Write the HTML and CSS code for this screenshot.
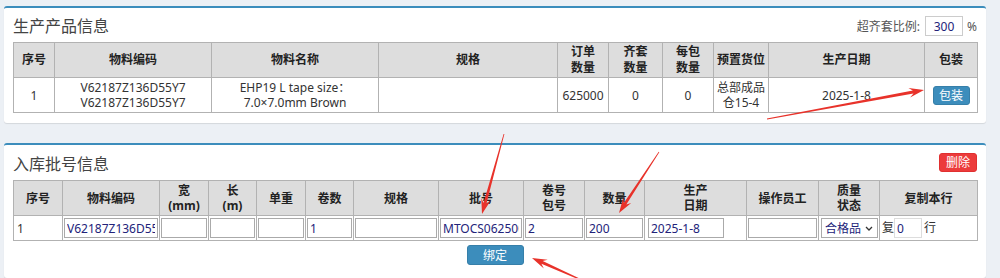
FILE: index.html
```html
<!DOCTYPE html>
<html lang="zh-CN">
<head>
    <meta charset="UTF-8">
    <title>生产入库</title>
    <link rel="stylesheet" href="styles.css">
</head>
<body>

<div class="wrap">

    <section class="box">
        <div class="box-head">
            <h3 class="box-title">生产产品信息</h3>
            <div class="ratio">
                <span>超齐套比例:</span>
                <input type="text" class="ratio-input" value="300">
                <span>%</span>
            </div>
        </div>
        <table class="grid grid-product">
            <colgroup>
                <col style="width:41px"><col style="width:157px"><col style="width:167px"><col style="width:179px">
                <col style="width:51px"><col style="width:54px"><col style="width:51px"><col style="width:55px">
                <col style="width:156px"><col style="width:53px">
            </colgroup>
            <thead>
                <tr>
                    <th>序号</th>
                    <th>物料编码</th>
                    <th>物料名称</th>
                    <th>规格</th>
                    <th>订单<br>数量</th>
                    <th>齐套<br>数量</th>
                    <th>每包<br>数量</th>
                    <th>预置货位</th>
                    <th>生产日期</th>
                    <th>包装</th>
                </tr>
            </thead>
            <tbody>
                <tr>
                    <td>1</td>
                    <td>V62187Z136D55Y7<br>V62187Z136D55Y7</td>
                    <td>EHP19 L tape size：<br>7.0×7.0mm Brown</td>
                    <td></td>
                    <td>625000</td>
                    <td>0</td>
                    <td>0</td>
                    <td>总部成品<br>仓15-4</td>
                    <td>2025-1-8</td>
                    <td><button class="btn btn-blue btn-sm">包装</button></td>
                </tr>
            </tbody>
        </table>
    </section>

    <section class="box box-batch">
        <div class="box-head box-head-tall">
            <h3 class="box-title">入库批号信息</h3>
            <button class="btn btn-red btn-sm">删除</button>
        </div>
        <table class="grid grid-batch">
            <colgroup>
                <col style="width:49px"><col style="width:97px"><col style="width:49px"><col style="width:48px">
                <col style="width:49px"><col style="width:48px"><col style="width:85px"><col style="width:85px">
                <col style="width:61px"><col style="width:60px"><col style="width:102px"><col style="width:72px">
                <col style="width:61px"><col style="width:98px">
            </colgroup>
            <thead>
                <tr>
                    <th>序号</th>
                    <th>物料编码</th>
                    <th>宽<br>(mm)</th>
                    <th>长<br>(m)</th>
                    <th>单重</th>
                    <th>卷数</th>
                    <th>规格</th>
                    <th>批号</th>
                    <th>卷号<br>包号</th>
                    <th>数量</th>
                    <th>生产<br>日期</th>
                    <th>操作员工</th>
                    <th>质量<br>状态</th>
                    <th>复制本行</th>
                </tr>
            </thead>
            <tbody>
                <tr>
                    <td class="num">1</td>
                    <td><input type="text" class="cell-input" value="V62187Z136D55Y7"></td>
                    <td><input type="text" class="cell-input"></td>
                    <td><input type="text" class="cell-input"></td>
                    <td><input type="text" class="cell-input"></td>
                    <td><input type="text" class="cell-input" value="1"></td>
                    <td><input type="text" class="cell-input"></td>
                    <td><input type="text" class="cell-input" value="MTOCS0625001"></td>
                    <td><input type="text" class="cell-input" value="2"></td>
                    <td><input type="text" class="cell-input" value="200"></td>
                    <td><input type="text" class="cell-input date-input" value="2025-1-8"></td>
                    <td><input type="text" class="cell-input"></td>
                    <td>
                        <div class="fake-select">
                            <span>合格品</span>
                            <svg width="8" height="5" viewBox="0 0 8 5"><path d="M1 1l3 3 3-3" fill="none" stroke="#333" stroke-width="1.3"/></svg>
                        </div>
                    </td>
                    <td class="copy-cell">复<input type="text" class="copy-input" value="0">行</td>
                </tr>
            </tbody>
        </table>
        <div class="actions">
            <button class="btn btn-blue btn-bind">绑定</button>
        </div>
    </section>

</div>

<!-- red annotation arrows drawn over the screenshot -->
<svg id="marks" class="marks" width="1000" height="278" viewBox="0 0 1000 278"></svg>

<script src="arrows.js"></script>
</body>
</html>
```

FILE: styles.css
```css
body {
    margin: 0;
    background: #ecf0f5;
    font-family: "Noto Sans", "Noto Sans CJK SC", sans-serif;
    font-size: 12px;
    color: #333;
}

.wrap {
    display: flex;
    flex-direction: column;
    gap: 20px;
    padding: 6px 14px 0 4px;
}

.box {
    background: #fff;
    border-top: 2px solid #3c8dbc;
    border-radius: 3px;
    box-shadow: 0 1px 1px rgba(0, 0, 0, 0.1);
    padding: 0 9px 10px;
}

.box-batch {
    padding-bottom: 13px;
}

.box-head {
    height: 34px;
    display: flex;
    align-items: center;
    justify-content: space-between;
}

.box-head-tall {
    height: 35px;
}

.box-title {
    margin: 0;
    font-size: 16px;
    font-weight: normal;
    color: #444;
}

.ratio {
    display: flex;
    align-items: center;
    color: #555;
    margin-top: 2px;
}

.ratio-input {
    width: 38px;
    height: 20px;
    box-sizing: border-box;
    margin: 0 4px 0 5px;
    border: 1px solid #ccc;
    text-align: center;
    font: 12px "Noto Sans", sans-serif;
    color: #23237a;
    padding: 0;
}

.grid {
    width: 100%;
    border-collapse: collapse;
    table-layout: fixed;
}

.grid th,
.grid td {
    border: 1px solid #b2b2b2;
    padding: 0;
    text-align: center;
}

.grid th {
    background: #dddddd;
    color: #222;
    font-weight: bold;
    height: 34px;
    line-height: 16px;
}

.grid-product td {
    height: 34px;
    line-height: 15px;
}

.grid-batch th {
    line-height: 15px;
}

.grid-batch td {
    height: 24px;
    padding: 0 1px;
    text-align: left;
}

.grid-batch td.num {
    padding-left: 3px;
}

.cell-input {
    display: block;
    width: 100%;
    height: 20px;
    box-sizing: border-box;
    border: 1px solid #aaa;
    padding: 0 2px;
    font: 12px "Noto Sans", sans-serif;
    color: #23237a;
}

.date-input {
    width: 76px;
    margin-left: 2px;
}

.fake-select {
    display: flex;
    align-items: center;
    justify-content: space-between;
    height: 20px;
    box-sizing: border-box;
    border: 1px solid #aaa;
    padding: 0 4px 0 3px;
    margin-left: 1px;
    color: #23237a;
}

.copy-cell {
    white-space: nowrap;
}

.grid-batch td.copy-cell {
    padding-left: 2px;
}

.copy-input {
    width: 28px;
    height: 20px;
    box-sizing: border-box;
    border: 1px solid #ddd;
    padding: 0 2px;
    margin: 0 2px 0 0;
    vertical-align: middle;
    font: 12px "Noto Sans", sans-serif;
    color: #23237a;
}

.btn {
    border: 1px solid transparent;
    border-radius: 3px;
    color: #fff;
    font-family: "Noto Sans", "Noto Sans CJK SC", sans-serif;
    font-size: 12px;
    cursor: pointer;
    padding: 0;
}

.btn-sm {
    width: 37px;
    height: 19px;
    line-height: 17px;
}

.btn-blue {
    background: #3c8dbc;
    border-color: #367fa9;
}

.btn-red {
    background: #ec3b3b;
    border-color: #e03030;
    width: 38px;
}

.actions {
    display: flex;
    justify-content: center;
    padding-top: 4px;
}

.btn-bind {
    width: 57px;
    height: 20px;
}

.marks {
    position: absolute;
    top: 0;
    left: 0;
    pointer-events: none;
}

.marks polygon {
    fill: #e8322a;
}
```

FILE: arrows.js
```js
// tail x, tail y, tip x, tip y
var arrows = [
    [767, 119, 924, 90],
    [504, 134, 482, 214],
    [659, 152, 619, 213],
    [586, 282, 532, 258]
];

var svg = document.getElementById('marks');

arrows.forEach(function (a) {
    var dx = a[2] - a[0], dy = a[3] - a[1];
    var len = Math.sqrt(dx * dx + dy * dy);
    var ux = dx / len, uy = dy / len;
    var nx = -uy, ny = ux;

    function pt(back, side) {
        return (a[2] - ux * back + nx * side).toFixed(1) + ',' +
               (a[3] - uy * back + ny * side).toFixed(1);
    }

    var pts = [pt(len, 0.4), pt(11, 1.5), pt(15, 4.8), pt(0, 0), pt(15, -4.8), pt(11, -1.5), pt(len, -0.4)];
    var poly = document.createElementNS('http://www.w3.org/2000/svg', 'polygon');
    poly.setAttribute('points', pts.join(' '));
    svg.appendChild(poly);
});
```
